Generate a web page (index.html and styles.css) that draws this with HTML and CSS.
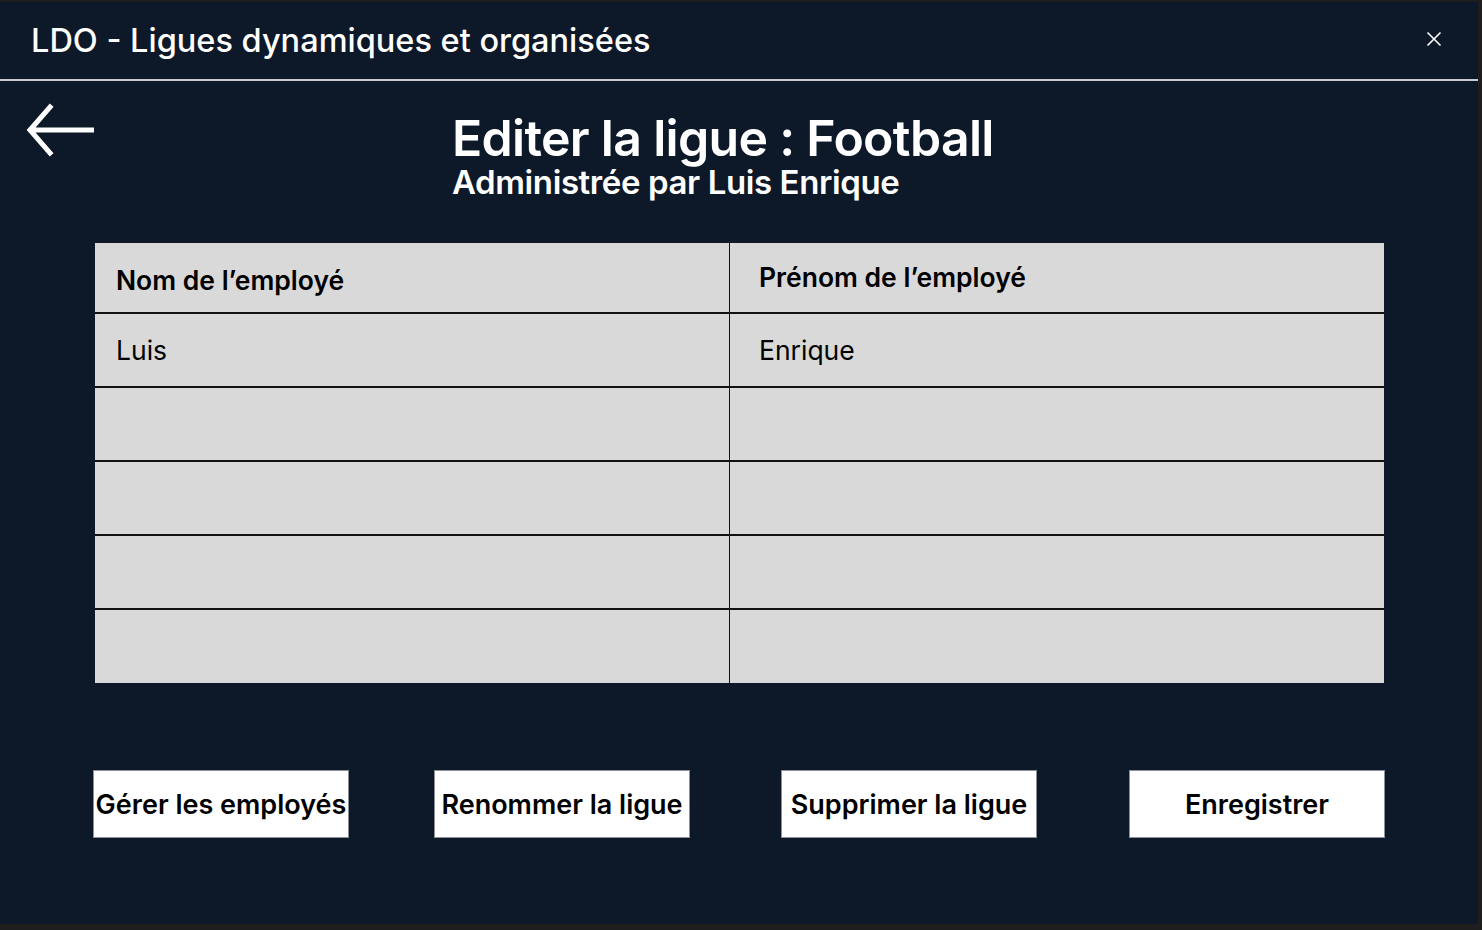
FILE: index.html
```html
<!DOCTYPE html>
<html lang="fr">
<head>
<meta charset="utf-8">
<title>LDO</title>
<link rel="stylesheet" href="styles.css">
</head>
<body>
<div class="window">
  <header class="topbar">
    <div class="app-title">LDO - Ligues dynamiques et organisées</div>
    <svg class="close" width="16" height="16" viewBox="0 0 16 16"><path d="M1.5 1.5 L14.5 14.5 M14.5 1.5 L1.5 14.5" stroke="#fff" stroke-width="1.6" fill="none"/></svg>
  </header>
  <section class="heading-row">
    <svg class="back" width="68" height="58" viewBox="0 0 68 58"><path d="M66 27 H5 M24 4 L4 27 L24 50" stroke="#fff" stroke-width="5" fill="none" stroke-linecap="square" stroke-linejoin="miter"/></svg>
    <div class="titles">
      <h1 class="title">Editer la ligue : Football</h1>
      <p class="subtitle">Administrée par Luis Enrique</p>
    </div>
  </section>
  <div class="table">
    <div class="cell head">Nom de l’employé</div>
    <div class="cell head head-right">Prénom de l’employé</div>
    <div class="cell">Luis</div>
    <div class="cell">Enrique</div>
    <div class="cell"></div><div class="cell"></div>
    <div class="cell"></div><div class="cell"></div>
    <div class="cell"></div><div class="cell"></div>
    <div class="cell last"></div><div class="cell last"></div>
  </div>
  <div class="actions">
    <button class="btn">Gérer les employés</button>
    <button class="btn">Renommer la ligue</button>
    <button class="btn">Supprimer la ligue</button>
    <button class="btn">Enregistrer</button>
  </div>
</div>
</body>
</html>
```
FILE: styles.css
```css
html, body {
  margin: 0;
  padding: 0;
  background: #1e1e1e;
}
body {
  font-family: Inter, "Noto Sans", sans-serif;
  width: 1482px;
  height: 930px;
  overflow: hidden;
}
.window {
  margin-top: 2px;
  width: 1478px;
  height: 922px;
  background: #0d1829;
  color: #fff;
}
.topbar {
  height: 77px;
  border-bottom: 2px solid #c9cbcf;
  display: flex;
  align-items: center;
  justify-content: space-between;
  padding: 0 36px 0 31px;
  box-sizing: content-box;
}
.app-title {
  font-size: 32.5px;
  font-weight: 500;
}
.close {
  margin-top: -4px;
}
.heading-row {
  display: flex;
  align-items: flex-start;
  padding-left: 26px;
  padding-top: 22px;
  height: 162px;
  box-sizing: border-box;
}
.back {
  flex: none;
}
.titles {
  margin-left: 358px;
  margin-top: 10px;
}
.title {
  margin: 0;
  font-size: 50px;
  font-weight: 600;
  letter-spacing: -0.7px;
  line-height: 50px;
}
.subtitle {
  margin: 4px 0 0;
  font-size: 33px;
  font-weight: 600;
  letter-spacing: -0.4px;
  line-height: 30px;
}
.table {
  margin-left: 95px;
  width: 1289px;
  display: grid;
  grid-template-columns: 635px 654px;
  grid-template-rows: 71px repeat(4, 74px) 73px;
  background: #d9d9d9;
  color: #000;
}
.cell {
  border-bottom: 2px solid #111;
  display: flex;
  align-items: center;
  padding-left: 21px;
  font-size: 26.5px;
  font-weight: 400;
  box-sizing: border-box;
}
.cell:nth-child(odd) {
  border-right: 1.5px solid #111;
}
.cell:nth-child(even) {
  padding-left: 29px;
}
.cell.last {
  border-bottom: none;
}
.head {
  font-weight: 600;
  padding-top: 4px;
}
.head-right {
  padding-top: 0;
  padding-bottom: 2px;
}
.actions {
  display: flex;
  margin: 87px 0 0 93px;
}
.btn {
  flex: none;
  width: 256px;
  height: 68px;
  background: #fff;
  border: 1px solid #8a8f99;
  color: #000;
  font-family: Inter, "Noto Sans", sans-serif;
  font-size: 27px;
  font-weight: 600;
  padding: 0;
  white-space: nowrap;
}
.btn:nth-child(2) {
  margin-left: 85px;
}
.btn:nth-child(3) {
  margin-left: 91px;
}
.btn:nth-child(4) {
  margin-left: 92px;
}
```
